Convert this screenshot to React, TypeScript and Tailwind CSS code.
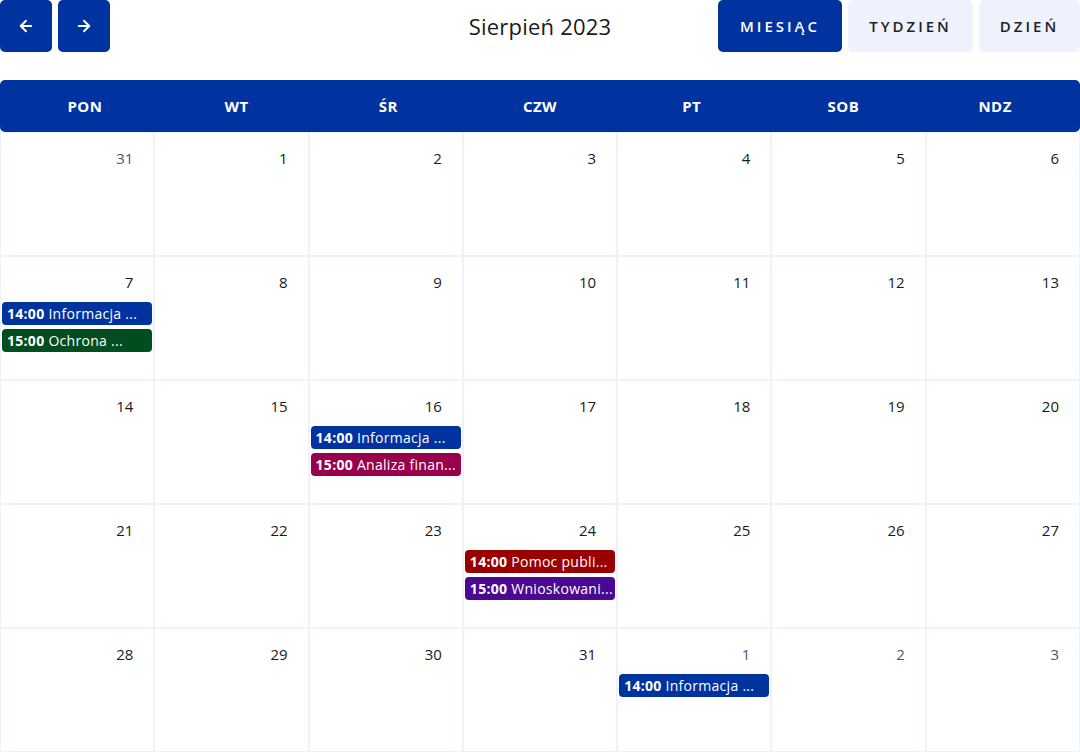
import React from 'react';

type Ev = { time: string; title: string; color: string };

const DAYS = ['PON', 'WT', 'ŚR', 'CZW', 'PT', 'SOB', 'NDZ'];

// titles already shortened the way the calendar shows them
const EVENTS: Record<string, Ev[]> = {
  '8-7': [
    { time: '14:00', title: 'Informacja ...', color: 'bg-[#0033a0]' },
    { time: '15:00', title: 'Ochrona ...', color: 'bg-[#004d20]' },
  ],
  '8-16': [
    { time: '14:00', title: 'Informacja ...', color: 'bg-[#0033a0]' },
    { time: '15:00', title: 'Analiza finan...', color: 'bg-[#99004c]' },
  ],
  '8-24': [
    { time: '14:00', title: 'Pomoc publi...', color: 'bg-[#990000]' },
    { time: '15:00', title: 'Wnioskowani...', color: 'bg-[#4b0890]' },
  ],
  '9-1': [{ time: '14:00', title: 'Informacja ...', color: 'bg-[#0033a0]' }],
};

const buildWeeks = () => {
  const cells: { day: number; month: number }[] = [{ day: 31, month: 7 }];
  for (let d = 1; d <= 31; d++) cells.push({ day: d, month: 8 });
  for (let d = 1; d <= 3; d++) cells.push({ day: d, month: 9 });
  const weeks = [];
  for (let i = 0; i < cells.length; i += 7) weeks.push(cells.slice(i, i + 7));
  return weeks;
};

const ArrowLeft = () => (
  <svg width="18" height="18" viewBox="0 0 24 24" fill="none" stroke="currentColor" strokeWidth="2.5" strokeLinecap="round" strokeLinejoin="round">
    <path d="M19 12H5" />
    <path d="M12 19l-7-7 7-7" />
  </svg>
);

const ArrowRight = () => (
  <svg width="18" height="18" viewBox="0 0 24 24" fill="none" stroke="currentColor" strokeWidth="2.5" strokeLinecap="round" strokeLinejoin="round">
    <path d="M5 12h14" />
    <path d="M12 5l7 7-7 7" />
  </svg>
);

export default function App() {
  const weeks = buildWeeks();

  return (
    <div className="w-[1080px] h-[752px] bg-white text-[#1a1a1a] font-['Open_Sans','Lato',sans-serif] flex flex-col">
      {/* toolbar */}
      <div className="flex items-center justify-between h-[52px]">
        <div className="flex gap-[6px] w-[362px]">
          <button type="button" className="w-[52px] h-[52px] rounded-[5px] bg-[#0033a0] text-white flex items-center justify-center">
            <ArrowLeft />
          </button>
          <button type="button" className="w-[52px] h-[52px] rounded-[5px] bg-[#0033a0] text-white flex items-center justify-center">
            <ArrowRight />
          </button>
        </div>
        <div className="text-[22px] text-[#1a1a1a] tracking-[0.01em]">Sierpień 2023</div>
        <div className="flex gap-[6px]">
          <button type="button" className="w-[124px] h-[52px] rounded-[5px] bg-[#0033a0] text-white text-[15px] font-semibold tracking-[0.2em]">
            MIESIĄC
          </button>
          <button type="button" className="w-[125px] h-[52px] rounded-[5px] bg-[#eef2fd] text-[#1f1f1f] text-[15px] font-semibold tracking-[0.2em]">
            TYDZIEŃ
          </button>
          <button type="button" className="w-[101px] h-[52px] rounded-[5px] bg-[#eef2fd] text-[#1f1f1f] text-[15px] font-semibold tracking-[0.2em]">
            DZIEŃ
          </button>
        </div>
      </div>

      {/* header */}
      <div className="mt-[28px] h-[52px] rounded-[5px] bg-[#0033a0] grid grid-cols-7 px-[9px]">
        {DAYS.map((d) => (
          <div key={d} className="flex items-center justify-center text-white text-[15px] font-bold tracking-[0.03em]">
            {d}
          </div>
        ))}
      </div>

      {/* grid */}
      <div className="flex flex-col flex-1">
        {weeks.map((week, wi) => (
          <div key={wi} className="grid grid-cols-7 h-[124px]">
            {week.map((c) => {
              const evs = EVENTS[`${c.month}-${c.day}`] || [];
              const other = c.month !== 8;
              return (
                <div key={`${c.month}-${c.day}`} className="border border-[#eef2fc] flex flex-col">
                  <div className={`text-right pr-[20px] pt-[15px] text-[15px] leading-[20px] ${other ? 'text-[#4a5572]' : 'text-[#1a1a1a]'}`}>
                    {c.day}
                  </div>
                  <div className="flex flex-col gap-[4px] mt-[10px] px-[1px]">
                    {evs.map((e, i) => (
                      <div key={i} className={`${e.color} h-[23px] rounded-[4px] px-[5px] flex items-center text-white text-[14px] tracking-[0.02em] leading-[23px] whitespace-nowrap overflow-hidden`}>
                        <span className="font-bold">{e.time}</span>
                        <span className="ml-[4px]">{e.title}</span>
                      </div>
                    ))}
                  </div>
                </div>
              );
            })}
          </div>
        ))}
      </div>
    </div>
  );
}
